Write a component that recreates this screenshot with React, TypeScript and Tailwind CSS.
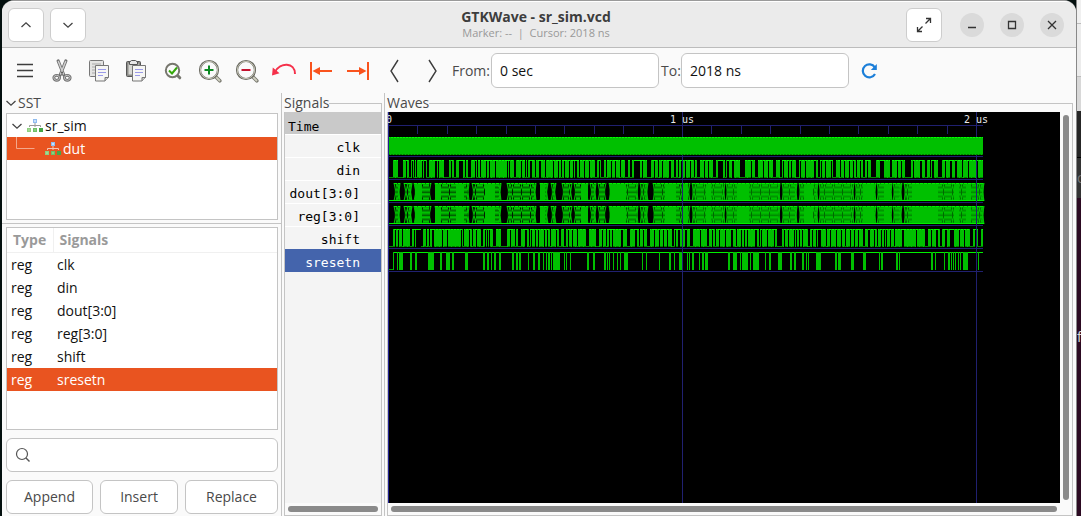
import React from "react";

/* ---------- wave data: pixel ranges from the start of the trace ---------- */

type Gap = { from: number; to: number; high: boolean };

// "12-15L" is a level held low from 12 to 15, "19H" a one-pixel high level.
const parseGaps = (text: string): Gap[] =>
  text
    .trim()
    .split(/\s+/)
    .map((item) => {
      const [a, b] = item.slice(0, -1).split("-").map(Number);
      return { from: a, to: b ?? a + 1, high: item.endsWith("H") };
    });

const END = 595;

const DIN = parseGaps(`
1-5L 10-15L 18H 21-23L 24H 26L 28L 34H 36-38H 39-41L 47-49H 50H 56-61L 63H 66-68L 71-75H 77L 80-83L 87H 89L 92L 98H
101H 107H 119H 121H 126-128L 133H 137L 139L 142-144H 147L 151-153H 157L 165H 170H 173L 176H 181H 185H 187-189H 191L
196H 201H 207-209L 211H 213-216L 218L 223H 227H 232L 237-240L 242-244L 246-252H 254H 259-263L 266H 270L 274H 281-283H
286-288L 290L 293H 297H 302H 306L 309-312L 316H 320H 325-328L 330-335H 337L 339-341H 344-346H 352-357L 363H 367-370L
375H 380H 385-388L 392-394L 395H 400H 403H 408-411L 412H 417H 426-428H 430-432L 433H 437H 443H 445-448L 452L 456H
461H 465H 468L 472H 475-477L 479H 483-488L 492-496H 502-504L 509H 513H 517-523L 525H 532-534H 537-539L 542L 544-546H
550-554L 557H 562-564H 567-569H 574L 580H 589H`);

const SHIFT = parseGaps(`
1-5L 7H 10H 14L 22-24L 26H 28-33H 33-35L 38L 41L 44-46H 54H 59H 73H 75L 81H 84L 88H 93-95L 97H 99H 101H 105-108L
113-119L 122H 127L 130-133L 137-139H 141L 143H 147H 150H 156H 159H 162L 168H 171-173L 176-178L 180H 184H 189L
198-201L 208-211L 214H 218L 221H 224H 233-235H 239-242L 247-249H 251L 255H 259-262L 266H 271H 275H 279H 284-286L
287H 290-292H 297-299H 302-305L 312H 319-321L 324H 327L 331H 337H 343-345H 348L 353H 356H 359H 367-369H 371L 373H
379H 386H 389-394L 396H 400H 406H 408H 411H 414H 420-422L 424H 428H 430-433H 438L 442H 448H 453H 457L 462H 466H 470H
475-477L 480-482H 486H 489L 493H 496H 498H 502H 506L 514-516H 528H 537-540L 543H 548-550H 552-554L 557-559H 562-566H
571H 576H 582-585L 587-589H 590-593L`);

// Pulses of sresetn, which rests high: [start, width].
const RESET: number[][] = [
  [0, 1], [9, 1], [11, 4], [22, 2], [27, 2], [40, 6], [52, 2], [58, 4], [64, 2], [77, 3], [95, 2], [99, 2], [103, 1],
  [106, 2], [111, 2], [124, 2], [128, 2], [131, 2], [140, 1], [145, 2], [150, 2], [155, 1], [158, 1], [160, 2],
  [163, 1], [165, 7], [176, 1], [178, 1], [182, 1], [199, 2], [205, 2], [216, 2], [219, 1], [221, 1], [225, 1],
  [229, 1], [232, 1], [236, 4], [254, 1], [258, 1], [271, 1], [281, 2], [286, 1], [291, 4], [299, 1], [301, 1],
  [304, 2], [311, 1], [314, 2], [317, 3], [340, 2], [345, 4], [352, 1], [354, 6], [362, 1], [365, 6], [377, 1],
  [381, 2], [390, 4], [402, 2], [406, 2], [414, 2], [418, 1], [420, 1], [428, 2], [430, 3], [447, 2], [450, 3],
  [463, 3], [475, 3], [491, 1], [493, 2], [508, 2], [511, 1], [543, 2], [547, 1], [556, 1], [560, 2], [563, 1],
  [565, 1], [567, 1], [570, 1], [572, 1], [575, 5], [590, 1],
];

const BUS_IDLE: number[][] = [
  [0, 6], [12, 16], [24, 26], [43, 47], [81, 84], [113, 119], [148, 152], [160, 163], [168, 174], [184, 186],
  [200, 202], [208, 210], [218, 221], [250, 252], [260, 265], [302, 304], [337, 338], [392, 394], [409, 411],
  [430, 431], [466, 467], [488, 489], [504, 505], [514, 516],
];

const BUS_SOLID: number[][] = [
  [27, 34], [47, 53], [68, 76], [97, 107], [152, 157], [193, 200], [222, 238], [277, 288], [295, 300], [318, 323],
  [349, 361], [416, 425], [475, 486], [496, 502], [524, 550], [566, 571], [578, 583],
];

const Binary = ({ y, gaps }: { y: number; gaps: Gap[] }) => (
  <g>
    <rect x={0} y={y} width={END} height={18} fill="#00c000" />
    <line x1={0} x2={END} y1={y + 0.5} y2={y + 0.5} stroke="#00ff00" strokeDasharray="2 1" />
    <line x1={0} x2={END} y1={y + 17.5} y2={y + 17.5} stroke="#008000" strokeDasharray="3 1" />
    {gaps.map((g) => (
      <g key={g.from}>
        <rect x={g.from} y={y} width={g.to - g.from} height={18} fill="#000" />
        <rect
          x={g.from}
          y={g.high ? y : y + 17}
          width={g.to - g.from}
          height={1}
          fill={g.high ? "#00f000" : "#008a00"}
        />
      </g>
    ))}
  </g>
);

const Reset = ({ y }: { y: number }) => (
  <g>
    <rect x={5} y={y} width={END - 5} height={1} fill="#00f000" />
    <rect x={0} y={y + 17} width={5} height={1} fill="#00a000" />
    <rect x={5} y={y} width={1} height={18} fill="#00c000" />
    {RESET.map(([x, w]) => (
      <rect key={x} x={x} y={y} width={w} height={18} fill="#00c000" />
    ))}
  </g>
);

// Stretches where the bus value changes: everything between the idle ranges.
const BUS_ACTIVE: number[][] = BUS_IDLE.map(([, end], i) => [end, BUS_IDLE[i + 1]?.[0] ?? END + 1]);

const crossings = (a: number, b: number, y: number) => {
  let d = "";
  let i = 0;
  for (let x = a; x < b - 1; i += 1) {
    const w = Math.min(4, b - x);
    d += `M${x} ${y}L${x + w} ${y + 18}M${x + w} ${y}L${x} ${y + 18}`;
    x += (i * 5 + a) % 4 === 0 ? 3 : 2;
  }
  return d;
};

const Bus = ({ y }: { y: number }) => (
  <g>
    {BUS_ACTIVE.map(([a, b]) => (
      <g key={a}>
        <rect x={a} y={y} width={b - a} height={18} fill="#00c000" opacity={a > 300 ? 0.55 : a > 220 ? 0.4 : 0.15} />
        <path d={crossings(a, b, y)} stroke="#00c000" strokeWidth={1.1} fill="none" shapeRendering="auto" />
        <line x1={a} x2={b} y1={y + 0.5} y2={y + 0.5} stroke="#00f000" strokeDasharray="3 1" />
      </g>
    ))}
    {BUS_SOLID.map(([a, b]) => (
      <rect key={a} x={a} y={y + 1} width={b - a} height={16} fill="#00c000" />
    ))}
    <path d={`M0 ${y}L1 ${y + 18}`} stroke="#00a000" />
    <rect x={0} y={y + 17} width={END + 1} height={1} fill="#00f000" />
  </g>
);

const Waves = () => (
  <svg
    className="block h-full w-full"
    shapeRendering="crispEdges"
    role="img"
    aria-label="Waves"
    fontFamily='"DejaVu Sans Mono", monospace'
    fontSize={10}
  >
    <rect x={0} y={13} width={END} height={1} fill="#202070" />
    {Array.from({ length: 20 }, (_, i) => (
      <rect key={i} x={Math.round((i + 1) * 29.4)} y={13} width={1} height={9} fill="#202070" />
    ))}
    {[44, 67, 90, 113, 136, 159].map((y) => (
      <rect key={y} x={0} y={y} width={END} height={1} fill="#202070" />
    ))}
    <rect x={0} y={25} width={END} height={18} fill="#00c000" />
    <line x1={0} x2={END} y1={25.5} y2={25.5} stroke="#00ff00" strokeDasharray="2 1" />
    <line x1={0} x2={END} y1={42.5} y2={42.5} stroke="#008000" strokeDasharray="2 1" />
    <Binary y={48} gaps={DIN} />
    <Bus y={71} />
    <Bus y={94} />
    <Binary y={117} gaps={SHIFT} />
    <Reset y={140} />
    <rect x={0} y={0} width={1} height="100%" fill="#202090" />
    <rect x={294} y={0} width={1} height={25} fill="#202070" />
    <rect x={294} y={43} width={1} height="100%" fill="#202070" />
    <rect x={588} y={0} width={1} height={25} fill="#202070" />
    <rect x={588} y={43} width={1} height="100%" fill="#202070" />
    <g fill="#e8e8e8">
      <text x={-2} y={11}>0</text>
      <text x={282} y={11}>1 us</text>
      <text x={576} y={11}>2 us</text>
    </g>
  </svg>
);

/* ------------------------------- icons ------------------------------- */

const Svg = ({ size = 24, children }: { size?: number; children: React.ReactNode }) => (
  <svg width={size} height={size} viewBox={`0 0 ${size} ${size}`} fill="none" aria-hidden="true">
    {children}
  </svg>
);

const MenuIcon = () => (
  <Svg>
    <path d="M4 5.500h16M4 11.500h16M4 17.500h16" stroke="#3d3d3d" strokeWidth={1.300} />
  </Svg>
);

const CutIcon = () => (
  <Svg>
    <path d="M8.200 2 13.800 16M15.800 2 10.200 16" stroke="#707070" strokeWidth={3.200} strokeLinecap="round" />
    <path d="M8.400 2.500 13.400 15M15.600 2.500 10.600 15" stroke="#d0d0d0" strokeWidth={1.500} strokeLinecap="round" />
    <ellipse cx={6.700} cy={18.800} rx={2.900} ry={2.500} stroke="#707070" strokeWidth={2.800} />
    <ellipse cx={17.300} cy={18.800} rx={2.900} ry={2.500} stroke="#707070" strokeWidth={2.800} />
    <ellipse cx={6.700} cy={18.800} rx={2.900} ry={2.500} stroke="#c4c4c4" strokeWidth={1} />
    <ellipse cx={17.300} cy={18.800} rx={2.900} ry={2.500} stroke="#c4c4c4" strokeWidth={1} />
    <circle cx={12} cy={13.500} r={1} fill="#555" />
  </Svg>
);

const FrontSheet = () => (
  <>
    <path d="M8.500 6.500h13v12l-3.500 3.500h-9.500z" fill="#f6f6f4" stroke="#777" />
    <path d="M21.500 18.500h-3.500v3.500" fill="#ccc" stroke="#777" />
    <path d="M11 10.500h8M11 13.500h8M11 16.500h5" stroke="#9a9ae8" />
  </>
);

const CopyIcon = () => (
  <Svg>
    <rect x={2.500} y={1.500} width={14} height={16} rx={1} fill="#e4e4e2" stroke="#777" />
    <path d="M5 5h9M5 8h4M5 11h3M5 14h3" stroke="#aaa" />
    <FrontSheet />
  </Svg>
);

const PasteIcon = () => (
  <Svg>
    <rect x={2.500} y={2.500} width={14} height={15} rx={1} fill="#8c8c88" stroke="#555" />
    <rect x={4.500} y={4.500} width={10} height={11} fill="#d8d8d4" />
    <path d="M5.500 5.500v-2.500l2-1.500h4l2 1.500v2.500z" fill="#e8e8e8" stroke="#555" />
    <FrontSheet />
  </Svg>
);

const Magnifier = ({ children }: { children: React.ReactNode }) => (
  <Svg>
    <path d="M17.500 17.500l4.300 4.300" stroke="#77776e" strokeWidth={3.600} strokeLinecap="round" />
    <path d="M17.500 17.500l4 4" stroke="#d0d0c0" strokeWidth={1.800} strokeLinecap="round" />
    <circle cx={11} cy={11} r={9} fill="#fafafa" stroke="#66665e" strokeWidth={2.200} />
    <circle cx={11} cy={11} r={8.700} stroke="#d0d0c0" strokeWidth={0.900} />
    {children}
  </Svg>
);

const ZoomFitIcon = () => (
  <Svg>
    <path d="M16.500 16.500l2.300 2.300" stroke="#77776e" strokeWidth={3} strokeLinecap="round" />
    <circle cx={11.500} cy={11.500} r={6.700} fill="#fafafa" stroke="#77776e" strokeWidth={2} />
    <path d="M8 11.500l3 3 5-6" stroke="#35a80a" strokeWidth={2} />
  </Svg>
);

const UndoIcon = () => (
  <svg width={26} height={24} viewBox="0 0 26 24" fill="none" aria-hidden="true">
    <path d="M4 13C9 3 24 3 24 15" stroke="#f5304a" strokeWidth={2} />
    <path d="M1 16.500 1.800 8.500 8.500 14.200z" fill="#f5304a" />
  </svg>
);

const ToStartIcon = ({ flip = false }: { flip?: boolean }) => (
  <Svg>
    <g transform={flip ? "matrix(-1 0 0 1 24 0)" : undefined}>
      <path d="M2 3v18" stroke="#f9531d" strokeWidth={2} />
      <path d="M9 12h14" stroke="#f9531d" strokeWidth={2} />
      <path d="M3.500 12 11 8v8z" fill="#f9531d" />
    </g>
  </Svg>
);

const AngleIcon = ({ flip = false }: { flip?: boolean }) => (
  <Svg>
    <path d={flip ? "M9 1l7 11-7 11" : "M15 1 8 12l7 11"} stroke="#3d3d3d" strokeWidth={1.400} />
  </Svg>
);

const ReloadIcon = () => (
  <Svg size={18}>
    <path d="M14.800 5.400A6.500 6.500 0 1 0 15 12" stroke="#1c7fd9" strokeWidth={2.200} />
    <path d="M16.800 2v6h-6z" fill="#1c7fd9" />
  </Svg>
);

const Chevron = ({ up = false }: { up?: boolean }) => (
  <svg width={12} height={8} viewBox="0 0 12 8" fill="none" aria-hidden="true">
    <path d={up ? "M1.500 6 6 1.800 10.500 6" : "M1.500 2 6 6.200 10.500 2"} stroke="#444" strokeWidth={1.300} />
  </svg>
);

const ModuleIcon = ({ line }: { line: string }) => (
  <Svg size={16}>
    <path d="M8 5v4M2.500 9V7.500h11V9" stroke={line} />
    <rect x={6} y={1} width={4} height={4} fill="#8fbcf0" />
    <rect x={7} y={2} width={2} height={2} fill="#c8dffa" />
    <rect x={0} y={10} width={4} height={4} fill="#8fcf80" />
    <rect x={6} y={10} width={4} height={4} fill="#6fbf68" />
    <rect x={12} y={10} width={4} height={4} fill="#46a546" />
    <path d="M1.500 11.500h1v1h-1zM7.500 11.500h1v1h-1z" fill="#d8f5d0" />
  </Svg>
);

/* ------------------------------- parts ------------------------------- */

const ToolButton = ({ label, children }: { label: string; children: React.ReactNode }) => (
  <button type="button" aria-label={label} className="flex h-9 w-[37px] shrink-0 items-center justify-center">
    {children}
  </button>
);

const BarButton = ({ label, children }: { label: string; children: React.ReactNode }) => (
  <button
    type="button"
    aria-label={label}
    className="flex h-[34px] w-9 shrink-0 items-center justify-center rounded-md border border-[#cdcdcd] bg-white"
  >
    {children}
  </button>
);

const RoundButton = ({ label, children }: { label: string; children: React.ReactNode }) => (
  <button
    type="button"
    aria-label={label}
    className="flex size-6 items-center justify-center rounded-full bg-[#dadada]"
  >
    <svg width={10} height={10} viewBox="0 0 10 10" fill="none" stroke="#333" strokeWidth={1.300} aria-hidden="true">
      {children}
    </svg>
  </button>
);

const Frame = ({ title, children }: { title: string; children: React.ReactNode }) => (
  <section className="flex min-h-0 flex-1 flex-col">
    <div className="flex h-[19px] shrink-0 leading-5">
      <h2>{title}</h2>
      <div className="mt-[10px] flex-1 border-t border-r border-[#c4c4c4]" />
    </div>
    <div className="flex min-h-0 flex-1 flex-col border-x border-b border-[#c4c4c4]">{children}</div>
  </section>
);

const SIGNALS = [
  { name: "clk" },
  { name: "din" },
  { name: "dout[3:0]" },
  { name: "reg[3:0]" },
  { name: "shift" },
  { name: "sresetn", selected: true },
];

const actionClass = "h-[34px] rounded-md border border-[#c4c4c4] bg-white";

const LeftPane = () => (
  <aside className="flex w-[280px] shrink-0 flex-col border-r border-[#c4c4c4]">
    <div className="flex h-5 shrink-0 items-center gap-px pl-[3px]">
      <Chevron />
      <h2 className="leading-5">SST</h2>
    </div>
    <ul className="mr-[3px] ml-1 h-[107px] shrink-0 border border-[#c4c4c4] bg-white">
      <li className="flex h-[23px] items-center pl-1 text-[#111]">
        <Chevron />
        <span className="ml-1">
          <ModuleIcon line="#999" />
        </span>
        <span className="ml-0.5">sr_sim</span>
      </li>
      <li className="flex h-[23px] items-center bg-[#e95420] pl-[9px] text-white">
        <svg width={19} height={23} viewBox="0 0 19 23" fill="none" aria-hidden="true">
          <path d="M0.500 0v11.500h18" stroke="#f3a88c" />
        </svg>
        <span className="ml-[10px]">
          <ModuleIcon line="#f6c6b4" />
        </span>
        <span className="ml-0.5">dut</span>
      </li>
    </ul>
    <div className="mt-[3px] mb-[3px] h-px shrink-0 bg-[#c4c4c4]" />
    <div className="mr-[3px] ml-1 min-h-0 flex-1 overflow-hidden border border-[#c4c4c4] bg-white">
      <table className="w-full border-collapse text-left text-[#111]">
        <thead>
          <tr className="h-6 border-b border-[#f0f0f0] text-[#9a9a9a]">
            <th className="w-[46px] border-r border-[#f0f0f0] p-0 pl-1.5 leading-6">Type</th>
            <th className="p-0 pl-1.5 leading-6">Signals</th>
          </tr>
        </thead>
        <tbody>
          {SIGNALS.map((s) => (
            <tr key={s.name} className={s.selected ? "bg-[#e95420] text-white" : ""}>
              <td className="h-[23px] p-0 pl-1 leading-[23px]">reg</td>
              <td className="h-[23px] p-0 pl-1 leading-[23px]">{s.name}</td>
            </tr>
          ))}
        </tbody>
      </table>
    </div>
    <label className="mt-2 mr-[3px] ml-1 flex h-[34px] shrink-0 items-center rounded-md border border-[#c4c4c4] bg-white pl-2">
      <Svg size={16}>
        <circle cx={7} cy={7} r={5.500} stroke="#555" strokeWidth={1.200} />
        <path d="M11 11l3.500 3.500" stroke="#555" strokeWidth={1.400} />
      </Svg>
      <input type="search" aria-label="Search signals" className="min-w-0 flex-1 bg-transparent px-2 outline-none" />
    </label>
    <div className="mt-2 mr-[3px] mb-0.5 ml-1 flex shrink-0 gap-[7px]">
      <button type="button" className={`${actionClass} w-[87px]`}>Append</button>
      <button type="button" className={`${actionClass} w-[78px]`}>Insert</button>
      <button type="button" className={`${actionClass} flex-1`}>Replace</button>
    </div>
  </aside>
);

export default function App() {
  return (
    <div className="flex h-screen overflow-hidden bg-[#04100f] pl-0.5 font-['Open_Sans','Noto_Sans',sans-serif] text-sm text-[#4a4a4a]">
      <main className="flex min-w-0 flex-1 flex-col overflow-hidden rounded-t-xl border-t border-[#9a9a9a] bg-[#fafafa]">
        <header className="flex h-[47px] shrink-0 items-center justify-between border-t border-b border-t-white border-b-[#bcbcbc] bg-[#ebebeb] pr-3 pl-1.5">
          <div className="flex flex-1 gap-1.5">
            <BarButton label="Previous">
              <Chevron up />
            </BarButton>
            <BarButton label="Next">
              <Chevron />
            </BarButton>
          </div>
          <div className="text-center">
            <h1 className="text-sm leading-4 font-bold text-[#3d3d3d]">GTKWave - sr_sim.vcd</h1>
            <p className="text-[11px] leading-4 text-[#999]">Marker: --&nbsp; |&nbsp; Cursor: 2018 ns</p>
          </div>
          <div className="flex flex-1 items-center justify-end gap-4">
            <BarButton label="Full screen">
              <Svg size={16}>
                <path d="M9.500 6.500l5-5M10 1.500h4.500V6M6.500 9.500l-5 5M1.500 10v4.500H6" stroke="#333" strokeWidth={1.300} />
              </Svg>
            </BarButton>
            <span className="ml-0.5 flex gap-4">
              <RoundButton label="Minimize">
                <path d="M1 7.500h8" />
              </RoundButton>
              <RoundButton label="Maximize">
                <path d="M1.500 1.500h7v7h-7z" />
              </RoundButton>
              <RoundButton label="Close">
                <path d="M1 1l8 8M9 1l-8 8" />
              </RoundButton>
            </span>
          </div>
        </header>

        <div className="flex h-[45px] shrink-0 items-center pl-1">
          <ToolButton label="Menu"><MenuIcon /></ToolButton>
          <ToolButton label="Cut"><CutIcon /></ToolButton>
          <ToolButton label="Copy"><CopyIcon /></ToolButton>
          <ToolButton label="Paste"><PasteIcon /></ToolButton>
          <ToolButton label="Zoom to fit"><ZoomFitIcon /></ToolButton>
          <ToolButton label="Zoom in">
            <Magnifier>
              <path d="M11 6.500v9M6.500 11h9" stroke="#0b8a22" strokeWidth={2} />
            </Magnifier>
          </ToolButton>
          <ToolButton label="Zoom out">
            <Magnifier>
              <path d="M6.500 11h9" stroke="#c4122f" strokeWidth={2} />
            </Magnifier>
          </ToolButton>
          <ToolButton label="Undo zoom"><UndoIcon /></ToolButton>
          <ToolButton label="To start"><ToStartIcon /></ToolButton>
          <ToolButton label="To end"><ToStartIcon flip /></ToolButton>
          <ToolButton label="Previous edge"><AngleIcon /></ToolButton>
          <ToolButton label="Next edge"><AngleIcon flip /></ToolButton>
          <label htmlFor="from" className="w-[41px] shrink-0 pl-0.5">From:</label>
          <input
            id="from"
            defaultValue="0 sec"
            className="h-[35px] w-[168px] rounded-md border border-[#c4c4c4] bg-white px-2 text-[#111]"
          />
          <label htmlFor="to" className="w-[22px] shrink-0 pl-0.5">To:</label>
          <input
            id="to"
            defaultValue="2018 ns"
            className="h-[35px] w-[168px] rounded-md border border-[#c4c4c4] bg-white px-2 text-[#111]"
          />
          <button type="button" aria-label="Reload" className="flex size-10 items-center justify-center">
            <ReloadIcon />
          </button>
        </div>

        <div className="flex min-h-0 flex-1">
          <LeftPane />
          <div className="flex w-[103px] shrink-0 border-r border-[#c4c4c4] px-0.5">
            <Frame title="Signals">
              <div className="min-h-0 flex-1 bg-[#f4f4f4] font-['DejaVu_Sans_Mono',monospace] text-[13px] text-black">
                <div className="h-[22px] bg-[#c9c9c9] pt-1 pl-[3px] leading-[22px]">Time</div>
                <ul>
                  {SIGNALS.map((s) => (
                    <li
                      key={s.name}
                      className={
                        s.selected
                          ? "h-[23px] border-t border-[#4464ac] bg-[#4464ac] pr-[21px] text-right leading-[26px] text-white"
                          : "h-[23px] border-t border-white pr-[21px] text-right leading-[26px]"
                      }
                    >
                      {s.name}
                    </li>
                  ))}
                </ul>
              </div>
              <div className="flex h-3 shrink-0 items-center px-[3px]">
                <div className="h-1.5 flex-1 rounded-full bg-[#8a8a8a]" />
              </div>
            </Frame>
          </div>
          <div className="flex min-w-0 flex-1 pr-[3px] pl-0.5">
            <Frame title="Waves">
              <div className="flex min-h-0 flex-1">
                <div className="min-w-0 flex-1 overflow-hidden bg-black">
                  <Waves />
                </div>
                <div className="flex w-3 shrink-0 justify-center py-[3px]">
                  <div className="w-1.5 rounded-full bg-[#8a8a8a]" />
                </div>
              </div>
              <div className="flex h-3 shrink-0 items-center pr-[15px] pl-[3px]">
                <div className="h-1.5 flex-1 rounded-full bg-[#8a8a8a]" />
              </div>
            </Frame>
          </div>
        </div>
      </main>

      <div className="flex w-[5px] shrink-0 flex-col overflow-hidden border-l border-[#888]">
        <div className="h-6 shrink-0 border-b border-[#bbb] bg-[#f0f0f0]" />
        <div className="h-[53px] shrink-0 border-b border-[#bbb] bg-[#ececec]" />
        <div className="h-[34px] shrink-0 bg-[#d8d8d8]" />
        <div className="h-[47px] shrink-0 border-b border-black bg-[#262626]" />
        <div className="h-10 shrink-0 bg-[#333] leading-10 text-[#777]">o</div>
        <div className="flex-1 bg-[#2c0a22] pt-[129px] leading-5 text-[#ddd]">f</div>
      </div>
    </div>
  );
}
